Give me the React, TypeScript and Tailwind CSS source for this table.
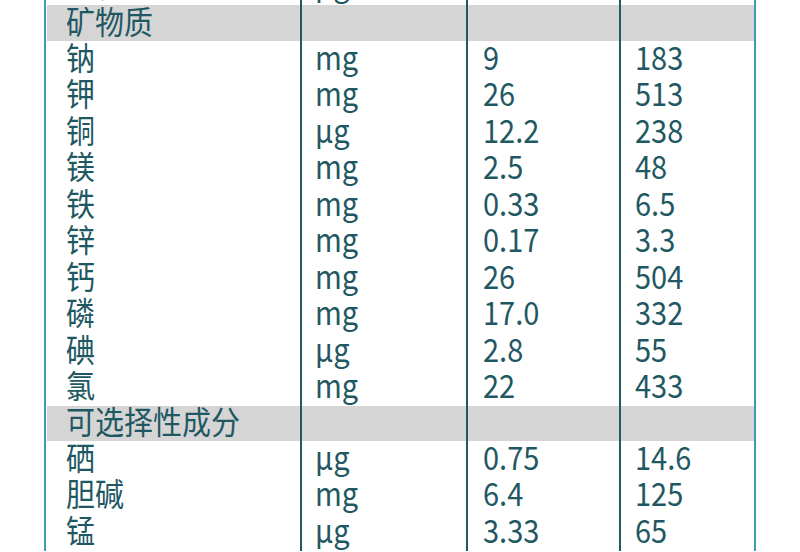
import React from "react";

type Row = { kind: "header"; name: string; h: string } | { kind: "data"; name: string; unit: string; a: string; b: string };

const rows: Row[] = [
  { kind: "data", name: "生物素", unit: "µg", a: "1.5", b: "30" },
  { kind: "header", name: "矿物质", h: "h-[36px]" },
  { kind: "data", name: "钠", unit: "mg", a: "9", b: "183" },
  { kind: "data", name: "钾", unit: "mg", a: "26", b: "513" },
  { kind: "data", name: "铜", unit: "µg", a: "12.2", b: "238" },
  { kind: "data", name: "镁", unit: "mg", a: "2.5", b: "48" },
  { kind: "data", name: "铁", unit: "mg", a: "0.33", b: "6.5" },
  { kind: "data", name: "锌", unit: "mg", a: "0.17", b: "3.3" },
  { kind: "data", name: "钙", unit: "mg", a: "26", b: "504" },
  { kind: "data", name: "磷", unit: "mg", a: "17.0", b: "332" },
  { kind: "data", name: "碘", unit: "µg", a: "2.8", b: "55" },
  { kind: "data", name: "氯", unit: "mg", a: "22", b: "433" },
  { kind: "header", name: "可选择性成分", h: "h-[35px]" },
  { kind: "data", name: "硒", unit: "µg", a: "0.75", b: "14.6" },
  { kind: "data", name: "胆碱", unit: "mg", a: "6.4", b: "125" },
  { kind: "data", name: "锰", unit: "µg", a: "3.33", b: "65" },
];

function T({ children }: { children: React.ReactNode }) {
  return <span className="inline-block origin-center scale-y-[1.11] whitespace-nowrap">{children}</span>;
}

export default function App() {
  return (
    <div
      className="w-[800px] h-[552px] overflow-hidden bg-white text-[#1f5862] text-[29px] font-normal leading-none"
      style={{ fontFamily: '"Noto Sans CJK SC", "Noto Sans", sans-serif' }}
    >
      <div className="ml-[44px] w-[712px] border-x-2 border-l-[#3d9cb4] border-r-[#3d9cb4] -mt-[31.5px]">
        {rows.map((r, i) => {
          const isH = r.kind === "header";
          const bg = isH ? "bg-[#d5d5d5]" : "bg-white";
          const h = r.kind === "header" ? r.h : "h-[36.5px]";
          return (
            <div key={i} className={`grid grid-cols-[255px_166px_153px_133px] pl-[1px] ${h}`}>
              <div className={`${bg} border-r-2 border-[#1e5b63] pl-[19px] pb-[6px] flex items-center`}>
                <T>{r.name}</T>
              </div>
              <div className={`${bg} border-r-2 border-[#1e5b63] pl-[13px] pb-[6px] flex items-center`}>
                {r.kind === "data" && <T>{r.unit}</T>}
              </div>
              <div className={`${bg} border-r-2 border-[#1e5b63] pl-[15px] pb-[6px] flex items-center`}>
                {r.kind === "data" && <T>{r.a}</T>}
              </div>
              <div className={`${bg} pl-[14px] pb-[6px] flex items-center`}>
                {r.kind === "data" && <T>{r.b}</T>}
              </div>
            </div>
          );
        })}
      </div>
    </div>
  );
}
